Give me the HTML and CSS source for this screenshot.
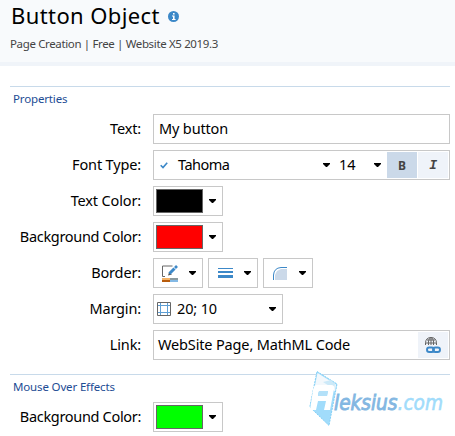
FILE: index.html
```html
<!DOCTYPE html>
<html lang="en">
<head>
<meta charset="utf-8">
<title>Button Object</title>
<link rel="stylesheet" href="styles.css">
</head>
<body>
<header class="header">
  <h1 class="title"><span class="title-text">Button Object</span>
    <svg class="info" viewBox="0 0 11 11"><circle cx="5.5" cy="5.5" r="5.5" fill="#3c88c8"/><path d="M5 2h1.6v1.5H5zM4 4.5h2.6V8h1v1H4V8h1V5.5H4z" fill="#fff"/></svg>
  </h1>
  <p class="subtitle">Page Creation | Free | Website X5 2019.3</p>
</header>
<main class="panel">
  <section class="group">
    <h2 class="heading">Properties</h2>
    <div class="row"><span class="label">Text:</span><div class="box wide"><span class="value">My button</span></div></div>
    <div class="row"><span class="label">Font Type:</span>
      <div class="box wide">
        <svg class="check" viewBox="0 0 8 7"><path d="M.7 3.3L3 5.6 7.2.8" fill="none" stroke="#3c88c8" stroke-width="1.6"/></svg>
        <span class="value v-font">Tahoma</span><i class="arrow font-arrow"></i>
        <span class="value v-size">14</span><i class="arrow size-arrow"></i>
        <span class="tool bold">B</span><span class="tool italic">I</span>
      </div>
    </div>
    <div class="row"><span class="label">Text Color:</span><div class="box color"><span class="swatch black"></span><i class="arrow"></i></div></div>
    <div class="row"><span class="label l-bg">Background Color:</span><div class="box color"><span class="swatch red"></span><i class="arrow"></i></div></div>
    <div class="row"><span class="label">Border:</span>
      <div class="buttons">
        <div class="box small">
          <svg class="icon" viewBox="0 0 16 17"><path d="M10.5 1H.5v10.500H3" fill="none" stroke="#666"/><path d="M6 10.500l1-3 3 2z" fill="#555"/><path d="M7.500 8.500l5-5" stroke="#3c88c8" stroke-width="3"/><path d="M13 3l2-2" stroke="#3c88c8" stroke-width="2.600"/><path fill="#f4b266" d="M0 13h8v2H0z"/><path fill="#b85c0c" d="M0 15h8v2H0z"/><path fill="#8a9a9f" d="M8 13h8v2H8z"/><path fill="#83b9e5" d="M8 15h8v2H8z"/></svg>
          <i class="arrow"></i></div>
        <div class="box small"><svg class="lines" viewBox="0 0 15 10"><path fill="#3c88c8" d="M0 0h15v1H0zM0 3h15v2H0zM0 7h15v3H0z"/></svg><i class="arrow"></i></div>
        <div class="box small"><svg class="corner" viewBox="0 0 14 13"><path fill="#cbd9e9" d="M2 13V8l2-4 4-2h6v11z"/><path d="M.5 13V8Q1 1 8 .5h6" fill="none" stroke="#3c88c8"/></svg><i class="arrow"></i></div>
      </div>
    </div>
    <div class="row"><span class="label">Margin:</span><div class="box margin">
      <svg class="frame" viewBox="0 0 14 14"><path d="M3.500 1v12M10.500 1v12M1 3.500h12M1 10.500h12" stroke="#5d9ed4"/><path d="M.5.5h13v13H.5z" fill="none" stroke="#666"/></svg>
      <span class="value v-margin">20; 10</span><i class="arrow"></i></div></div>
    <div class="row"><span class="label">Link:</span><div class="box wide"><span class="value v-link">WebSite Page, MathML Code</span>
      <span class="tool link"><svg class="globe" viewBox="0 0 16 17"><g fill="none" stroke="#666"><path d="M.5 8V5.500Q1 .5 6 .5t5.500 5V8M.5 6h11M2 3h8M6 .5V8M3.500 8V4Q4 1 6 .5 8 1 8.500 4v4"/></g><path fill="#eff3f9" d="M1 8.500h15V17H1z"/><g fill="none" stroke="#3c88c8" stroke-width="1.900"><rect x="2" y="10.500" width="7" height="4.500" rx="2.250"/><rect x="8" y="10.500" width="7" height="4.500" rx="2.250"/></g></svg></span></div></div>
  </section>
  <section class="group hover">
    <h2 class="heading">Mouse Over Effects</h2>
    <div class="row"><span class="label l-bg">Background Color:</span><div class="box color"><span class="swatch green"></span><i class="arrow"></i></div></div>
  </section>
</main>
<svg class="watermark" viewBox="0 0 140 57">
  <path d="M8 .5L28 13 20 54.500.8 36z" fill="#a1dcfb" stroke="#83d0f6" stroke-dasharray="2 1"/>
  <path d="M8.500 2L27 13.500l-1 7-7-6H6z" fill="#f3f8fc"/>
  <path d="M14 11l8-2 4 4-1 5z" fill="#cce9f8"/>
  <path fill-rule="evenodd" d="M7 14h15q4 0 3 4l-4 21h-6l2-9H9L7 39H1l3-20Q5 14 7 14zm2 11h9l1-5h-8q-2 0-2 5z" fill="#fff"/>
  <path d="M9 25l1-5h9l-1 5z" fill="#b4e1f9"/>
  <text x="25" y="39" class="brand" textLength="109" lengthAdjust="spacingAndGlyphs">leksius<tspan class="domain">.com</tspan></text>
</svg>
</body>
</html>
```

FILE: styles.css
```css
* { box-sizing: border-box; }
body { position: relative; margin: 0; width: 455px; height: 436px; overflow: hidden; background: #fff; color: #000; font-family: "Noto Sans", "Open Sans", sans-serif; font-size: 14.5px; letter-spacing: -.15px; }
.header { height: 66px; padding: 0 0 0 10px; background: #f8fafc; border-bottom: 4px solid #f0f4f9; }
.title { display: flex; align-items: center; height: 31px; margin: 0; padding-left: 1px; font-size: 22px; font-weight: 400; letter-spacing: .4px; white-space: nowrap; }
.title-text { width: 157px; margin-top: -2px; }
.info { width: 11px; height: 11px; margin-top: 2px; }
.subtitle { margin: 5px 0 0; font-size: 11.5px; line-height: 16px; letter-spacing: -.36px; color: #444; white-space: nowrap; }
.panel { padding: 20px 5px 0 10px; }
.group { border-top: 1px solid #c8daea; }
.group.hover { margin-top: 14px; }
.heading { margin: 0; padding-left: 3px; height: 27px; font-size: 11.5px; font-weight: 400; line-height: 24px; letter-spacing: -.15px; color: #1d4c94; }
.row { display: flex; align-items: center; height: 30px; margin-bottom: 6px; }
.label { width: 131px; margin-right: 12px; padding-bottom: 2px; text-align: right; white-space: nowrap; }
.l-bg { letter-spacing: -.32px; }
.box { display: flex; align-items: center; height: 30px; border: 1px solid #c8c8c8; background: #fff; }
.wide { width: 297px; padding-right: 1px; }
.value { padding: 0 0 2px 5px; white-space: nowrap; }
.color { width: 70px; padding-left: 2px; }
.swatch { width: 47px; height: 24px; border: 1px solid #666; }
.black { background: #000; }
.red { background: #f00; }
.green { background: #0f0; }
.arrow { width: 7px; height: 4px; background: #000; clip-path: polygon(0 0, 100% 0, 100% 25%, 57% 100%, 43% 100%, 0 25%); flex: none; }
.color .arrow { margin-left: 6px; }
.check { width: 8px; height: 7px; margin-left: 6px; }
.v-font { width: 155px; padding-left: 10px; letter-spacing: -.5px; }
.font-arrow { margin-left: auto; }
.v-size { width: 44px; padding-left: 9px; letter-spacing: 0; }
.size-arrow { margin-right: 4px; }
.tool { display: flex; align-items: center; justify-content: center; width: 30px; height: 26px; background: #eff3f9; color: #444; flex: none; }
.bold { margin-left: 2px; background: #cbd9e9; font-size: 12px; font-weight: 700; }
.italic { margin-left: 1px; font: italic 700 13px "Liberation Mono", monospace; }
.buttons { display: flex; gap: 5px; }
.small { width: 50px; padding: 0 6px 0 8px; justify-content: space-between; }
.icon { width: 16px; height: 17px; }
.lines { width: 15px; height: 10px; margin-left: 1px; }
.corner { width: 14px; height: 13px; margin-left: 1px; }
.margin { width: 130px; padding-left: 3px; }
.frame { width: 14px; height: 14px; }
.v-margin { width: 98px; padding-left: 6px; }
.v-link { padding-left: 4px; }
.link { margin-left: auto; }
.globe { width: 16px; height: 17px; }
.watermark { position: absolute; left: 309px; top: 371px; width: 140px; height: 57px; letter-spacing: 0; }
.brand { font: italic 400 21px "DejaVu Sans", sans-serif; fill: #83b7e2; stroke: #83b7e2; stroke-width: .9; }
.domain { fill: #a1dcfb; stroke: #a1dcfb; stroke-width: .6; }
```
